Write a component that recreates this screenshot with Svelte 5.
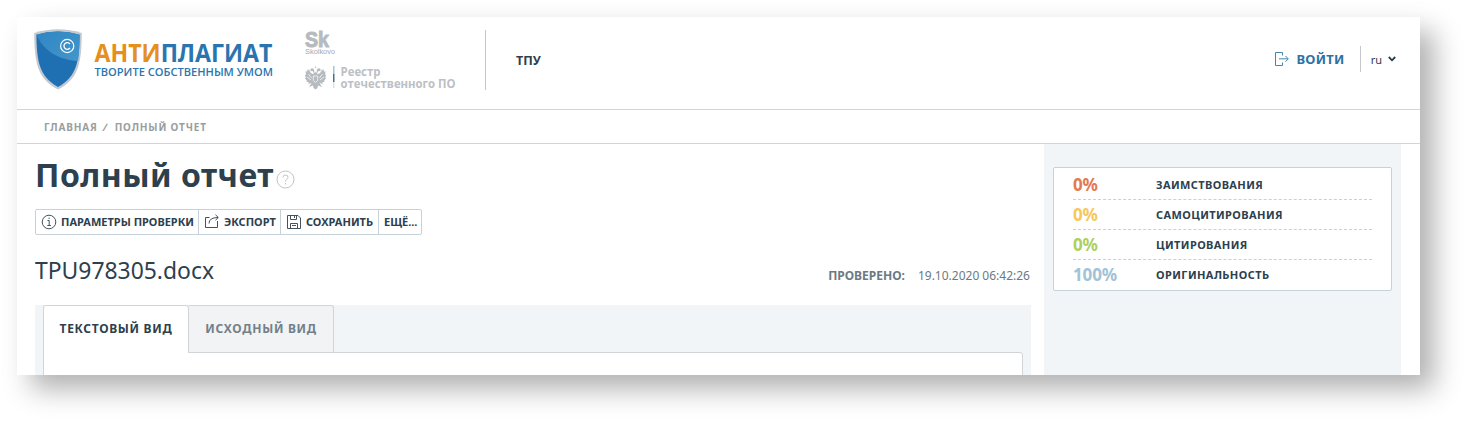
<script lang="ts">
  interface Stat {
    value: string;
    label: string;
    kind: string;
  }

  const stats: Stat[] = [
    { value: '0%', label: 'Заимствования', kind: 'borrowed' },
    { value: '0%', label: 'Самоцитирования', kind: 'self' },
    { value: '0%', label: 'Цитирования', kind: 'cited' },
    { value: '100%', label: 'Оригинальность', kind: 'original' }
  ];

  const tabs = ['Текстовый вид', 'Исходный вид'];
  let activeTab = $state(0);
</script>

<div class="window">
  <header>
    <svg class="logo" width="242" height="64" viewBox="0 0 242 64">
      <defs>
        <linearGradient id="gloss" x1="0" y1="0" x2="1" y2="1">
          <stop offset="0" stop-color="#2f86c2" />
          <stop offset="1" stop-color="#4496cb" />
        </linearGradient>
      </defs>
      <path d="M.2 3Q24 -4.500 47.800 3C47.500 32 45 49 24 59.500C3 49 .5 32 .2 3Z" fill="#c3c9d1" />
      <path d="M2.400 4.800Q24 -2 45.600 4.800C45.300 31 43 46.500 24 57C5 46.500 2.700 31 2.400 4.800Z" fill="#1f70b3" />
      <path d="M2.400 4.800Q24 -2 45.600 4.800C45.500 16 45.100 24 44 31C26 30 10 22 2.400 4.800Z" fill="url(#gloss)" />
      <circle cx="33.200" cy="16" r="6.600" fill="none" stroke="#fff" stroke-width="1.200" />
      <path d="M35.900 14A3.300 3.300 0 1 0 35.900 18" fill="none" stroke="#fff" stroke-width="1.300" />
      <text class="logo-name" x="60.500" y="31.800" textLength="178" lengthAdjust="spacingAndGlyphs"><tspan class="orange">АНТИ</tspan>ПЛАГИАТ</text>
      <text class="logo-slogan" x="60.500" y="46.300" textLength="178.500" lengthAdjust="spacingAndGlyphs">ТВОРИТЕ СОБСТВЕННЫМ УМОМ</text>
    </svg>

    <svg class="partners" width="156" height="64" viewBox="0 0 156 64">
      <text class="sk" x="0" y="17" textLength="24" lengthAdjust="spacingAndGlyphs">Sk</text>
      <text class="skolkovo" x="0" y="23.500" textLength="30" lengthAdjust="spacingAndGlyphs">Skolkovo</text>
      <g fill="#b6bbc0">
        <path d="M10.500 36l1 1.800h-2zM5.500 39q2-1.500 3.500.5l.5 4-1-1-1-1.500-2 .2zM15.500 39q-2-1.500-3.500.5l-.5 4 1-1 1-1.500 2 .2z" />
        <path d="M8 44Q5 43.500 4 39L2.800 41 2.500 39 1.500 42 .5 41 1 45-.2 44.500.8 48-.2 48 2 51 1 51.500 4 52.500 3 54 6.500 53 4 57 8 55.500 8.500 58 10.500 59.500 12.500 58 13 55.500 17 57 14.500 53 18 54 17 52.500 20 51.500 19 51 21.200 48 20.200 48 21.200 44.500 20 45 20.500 41 19.500 42 18.500 39 18.200 41 17 39Q16 43.500 13 44L10.500 42Z" />
      </g>
      <path d="M8.300 46h4.400v4.500l-2.200 2-2.200-2zM3.500 44l3 4M2 47l4 3M17.500 44l-3 4M19 47l-4 3" fill="none" stroke="#fff" stroke-width=".7" />
      <rect x="28" y="36" width="1.500" height="8" fill="#9cc6dc" />
      <rect x="28" y="44" width="1.500" height="8" fill="#4d6f83" />
      <rect x="28" y="52" width="1.500" height="6" fill="#dde1e4" />
      <text class="registry" x="35.500" y="46.300" textLength="40" lengthAdjust="spacingAndGlyphs">Реестр</text>
      <text class="registry" x="35.500" y="57.800" textLength="115" lengthAdjust="spacingAndGlyphs">отечественного ПО</text>
    </svg>

    <div class="org">ТПУ</div>

    <a class="login" href="#login">
      <svg width="16" height="16" viewBox="0 0 16 16" fill="none" stroke="#4586ad" stroke-width="1">
        <path d="M8.500 4.500v-3h-7v13h7v-3M5 7.800h9M11.500 5l2.800 2.800-2.800 2.800" />
      </svg>
      <span>Войти</span>
    </a>
    <div class="lang">
      <span>ru</span>
      <svg width="8" height="6" viewBox="0 0 8 6" fill="none" stroke="#263c48" stroke-width="1.800">
        <path d="M.8 1l3.200 3.300L7.200 1" />
      </svg>
    </div>
  </header>

  <nav class="crumbs">
    <span>Главная</span><span class="slash">/</span><span>Полный отчет</span>
  </nav>

  <div class="page">
    <main>
      <h1>
        <span class="title">Полный отчет</span>
        <svg class="help" width="19" height="19" viewBox="0 0 19 19" fill="none" stroke="#c2c2c2">
          <circle cx="9.500" cy="9.500" r="8.500" />
          <path d="M7 7.500Q7 5 9.500 5T12 7.300Q12 8.500 10.700 9.300T9.500 11.500M9.500 13v1.500" />
        </svg>
      </h1>

      <div class="toolbar">
        <button class="params">
          <svg width="16" height="16" viewBox="0 0 16 16" fill="none" stroke="#43535d">
            <circle cx="8" cy="8" r="6.800" />
            <path d="M6.500 6.500H8.200V11.500M6.300 11.500h3.600M7.500 4.200h1.300" />
          </svg>
          <span>Параметры проверки</span>
        </button>
        <button class="export">
          <svg width="16" height="16" viewBox="0 0 16 16" fill="none" stroke="#43535d">
            <path d="M5.500 3.500h-4v10h12V7M5 9.500Q5 3.500 14 3.500M11.500 .8l2.800 2.700-2.800 2.700" />
          </svg>
          <span>Экспорт</span>
        </button>
        <button class="save">
          <svg width="16" height="16" viewBox="0 0 16 16" fill="none" stroke="#43535d">
            <path d="M1.500 1.500h10.500l2.500 2.500v10.500h-13zM4.500 1.500v4h6v-4M8.500 2v2M4.500 14v-4.500h7V14M6 11.500h4" />
          </svg>
          <span>Сохранить</span>
        </button>
        <button class="more"><span>Ещё...</span></button>
      </div>

      <div class="doc">
        <h2>TPU978305.docx</h2>
        <div class="checked"><b>Проверено:</b><span>19.10.2020 06:42:26</span></div>
      </div>

      <section class="viewer">
        <div class="tabs">
          {#each tabs as tab, i}
            <button class="tab" class:active={activeTab === i} onclick={() => (activeTab = i)}>
              <span>{tab}</span>
            </button>
          {/each}
        </div>
        <div class="sheet"></div>
      </section>
    </main>

    <aside>
      <div class="stats">
        {#each stats as stat}
          <div class="stat">
            <span class="percent {stat.kind}">{stat.value}</span>
            <span class="name">{stat.label}</span>
          </div>
        {/each}
      </div>
    </aside>
  </div>
</div>

<style>
  :global(body) {
    background: #fff;
  }

  :global(#app) {
    box-sizing: border-box;
    height: 423px;
    padding: 17px 0 0 17px;
    overflow: hidden;
  }

  .window {
    width: 1403px;
    height: 358px;
    overflow: hidden;
    background: #fff;
    box-shadow: 14px 14px 26px rgba(0, 0, 0, 0.31);
    color: #2d404d;
    font-family: 'Noto Sans', 'Open Sans', sans-serif;
    display: flex;
    flex-direction: column;
  }

  header {
    box-sizing: border-box;
    flex: none;
    height: 93px;
    padding: 13px 24px 0 17px;
    border-bottom: 1px solid #d2d5d7;
    display: flex;
    align-items: flex-start;
  }

  .logo {
    overflow: visible;
  }

  .logo-name {
    font: bold 25.5px 'Open Sans', sans-serif;
    fill: #2a75b0;
  }

  .orange {
    fill: #e58f1e;
  }

  .logo-slogan {
    font: 600 11.3px 'Open Sans', sans-serif;
    fill: #2a75b0;
  }

  .partners {
    margin-left: 29px;
    overflow: visible;
  }

  .sk {
    font: bold 22px 'Liberation Sans', sans-serif;
    fill: #b6bbc0;
    stroke: #b6bbc0;
    stroke-width: 1px;
  }

  .skolkovo {
    font: 7px 'Liberation Sans', sans-serif;
    fill: #a3a9ae;
  }

  .registry {
    font: bold 11.5px 'Open Sans', sans-serif;
    fill: #bcc0c5;
  }

  .org {
    height: 60px;
    margin-left: 24px;
    padding-left: 30px;
    border-left: 1px solid #c4c8ca;
    font-size: 12.5px;
    font-weight: bold;
    line-height: 61px;
  }

  .login {
    display: flex;
    align-items: center;
    gap: 6px;
    height: 26px;
    margin: 16px 15px 0 auto;
    color: #2e71a5;
    font-size: 13px;
    font-weight: bold;
    letter-spacing: 0.3px;
    text-decoration: none;
    text-transform: uppercase;
  }

  .lang {
    display: flex;
    align-items: center;
    gap: 6px;
    height: 26px;
    margin-top: 16px;
    padding-left: 10px;
    border-left: 1px solid #c4c8ca;
    font-size: 11px;
  }

  .crumbs {
    box-sizing: border-box;
    flex: none;
    height: 34px;
    padding-left: 27px;
    border-bottom: 1px solid #d2d5d7;
    color: #999e9f;
    font-size: 10px;
    font-weight: bold;
    letter-spacing: 0.85px;
    line-height: 34px;
    text-transform: uppercase;
  }

  .slash {
    display: inline-block;
    margin: 0 7px 0 5px;
    transform: skewX(-12deg);
  }

  .page {
    flex: 1;
    display: flex;
    justify-content: space-between;
    padding: 0 19px 0 18px;
    min-height: 0;
  }

  main {
    width: 996px;
  }

  h1 {
    display: flex;
    align-items: flex-start;
    height: 65px;
    margin: 0;
    font-size: 32px;
    letter-spacing: 0.5px;
    line-height: 61px;
  }

  .title {
    width: 241px;
    white-space: nowrap;
  }

  .help {
    margin-top: 26px;
  }

  .toolbar {
    box-sizing: border-box;
    display: flex;
    width: 387px;
    height: 26px;
    border: 1px solid #c5d2da;
    border-radius: 2px;
  }

  .toolbar button {
    display: flex;
    align-items: center;
    gap: 4px;
    padding: 0 0 0 5px;
    border: 0;
    border-right: 1px solid #c5d2da;
    background: none;
    color: inherit;
    font: bold 11px 'Noto Sans', sans-serif;
    text-transform: uppercase;
    white-space: nowrap;
  }

  .toolbar span {
    padding-bottom: 1px;
  }

  .toolbar .params {
    width: 163px;
  }

  .toolbar .export {
    width: 82px;
  }

  .toolbar .save {
    width: 98px;
  }

  .toolbar .more {
    flex: 1;
    border-right: 0;
  }

  .toolbar svg {
    flex: none;
  }

  .doc {
    display: flex;
    justify-content: space-between;
    height: 70px;
  }

  h2 {
    margin: 0;
    font-size: 22.9px;
    font-weight: normal;
    line-height: 71px;
  }

  .checked {
    margin-right: 1px;
    color: #6b7a84;
    font-size: 12px;
    line-height: 82px;
  }

  .checked b {
    margin-right: 13px;
    text-transform: uppercase;
  }

  .viewer {
    padding: 0 8px;
    background: #f1f5f8;
  }

  .tabs {
    display: flex;
    height: 47px;
  }

  .tab {
    box-sizing: border-box;
    width: 145px;
    padding: 0 0 2px;
    border: 1px solid #d2d5d7;
    border-width: 1px 1px 0 0;
    border-radius: 0 3px 0 0;
    background: #f1f3f4;
    color: #73808a;
    font: bold 12px 'Noto Sans', sans-serif;
    letter-spacing: 0.7px;
    text-transform: uppercase;
    white-space: nowrap;
  }

  /* one pixel taller, to cover the sheet's top border */
  .tab.active {
    width: 146px;
    height: 48px;
    padding-bottom: 3px;
    border-left-width: 1px;
    border-radius: 3px 3px 0 0;
    background: #fff;
    color: #2d404d;
    z-index: 1;
  }

  .sheet {
    height: 40px;
    border: 1px solid #d2d5d7;
    border-radius: 0 3px 0 0;
    background: #fff;
  }

  aside {
    box-sizing: border-box;
    width: 357px;
    padding: 23px 9px 0;
    background: #f1f5f8;
  }

  .stats {
    box-sizing: border-box;
    height: 124px;
    padding: 2px 19px 0;
    border: 1px solid #c5d2da;
    border-radius: 2px;
    background: #fff;
  }

  .stat {
    box-sizing: border-box;
    display: flex;
    align-items: center;
    height: 30px;
    border-bottom: 1px dashed #c5d2da;
  }

  .stat:last-child {
    border-color: transparent;
  }

  .percent {
    width: 83px;
    font-size: 17px;
    font-weight: bold;
    letter-spacing: -0.1px;
  }

  .borrowed {
    color: #e27950;
  }

  .self {
    color: #f5c85c;
  }

  .cited {
    color: #adcf62;
  }

  .original {
    color: #a2c2d7;
  }

  .name {
    font-size: 11px;
    font-weight: bold;
    letter-spacing: 0.4px;
    text-transform: uppercase;
  }
</style>
